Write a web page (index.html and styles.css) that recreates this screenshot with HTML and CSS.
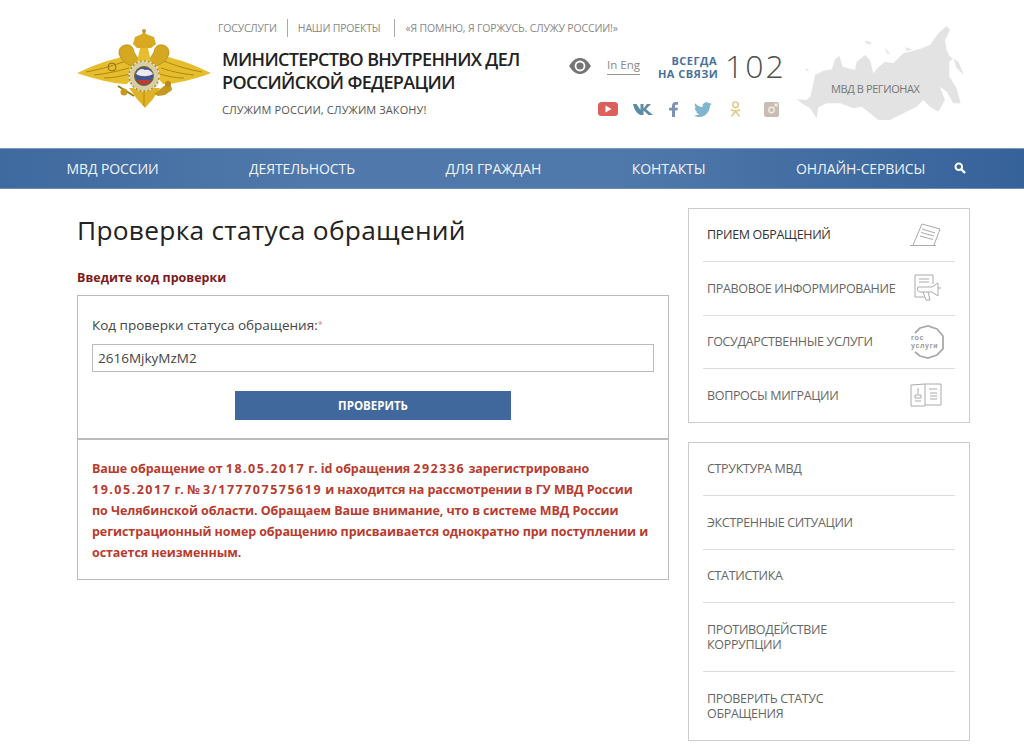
FILE: index.html
```html
<!DOCTYPE html>
<html lang="ru">
<head>
  <meta charset="UTF-8" />
  <title>Проверка статуса обращений</title>
  <link rel="stylesheet" href="styles.css">
</head>
<body>

  <header class="header">
    <svg class="logo" viewBox="0 0 145 90" width="145" height="90">
      <path d="M5 49 C20 42 38 35 56 32 C60 38 62 46 60 54 L55 60 C42 60 22 55 5 49Z" fill="#e6bd2c"/>
      <path d="M139 49 C124 42 108 35 90 32 C86 38 84 46 86 54 L91 60 C104 60 124 55 139 49Z" fill="#e6bd2c"/>
      <path d="M14 48 C26 46 40 42 54 37 M22 51 C34 50 46 47 57 44 M32 54 C40 54 50 52 58 50 M130 48 C118 46 104 42 92 37 M122 51 C110 50 98 47 89 44 M112 54 C104 54 94 52 88 50" stroke="#a8820f" stroke-width="0.9" fill="none"/>
      <circle cx="40" cy="43" r="4" fill="none" stroke="#8e7012" stroke-width="1"/>
      <path d="M57 64 L88 64 L81 75 L73 84 L65 75Z" fill="#e0b226"/>
      <path d="M72 60 V82" stroke="#a8820f" stroke-width="0.8"/>
      <path d="M72 6 L74 10 L82 13 L84 20 L79 24 H65 L61 20 L63 13 L70 10Z" fill="#d9a921"/>
      <circle cx="72" cy="7" r="2" fill="#b59b44"/>
      <path d="M47 30 C46 23 52 20 57 21 C60 22 62 25 62 28 L68 38 L60 42 C54 40 49 36 47 30Z" fill="#d5a822" stroke="#a8820f" stroke-width="0.6"/>
      <path d="M97 30 C98 23 92 20 87 21 C84 22 82 25 82 28 L76 38 L84 42 C90 40 95 36 97 30Z" fill="#d5a822" stroke="#a8820f" stroke-width="0.6"/>
      <path d="M68 24 H76 L79 38 H65Z" fill="#e6bd2c"/>
      <circle cx="72" cy="52" r="15" fill="#d6cfa6" stroke="#b59222" stroke-width="1.500"/>
      <circle cx="72" cy="52" r="15" fill="none" stroke="#f0ecd8" stroke-width="1.500" stroke-dasharray="2 2"/>
      <circle cx="72" cy="52" r="9.500" fill="#44558f" stroke="#8a6a14"/>
      <path d="M64 50 C66 45 70 44 73 46 C77 45 79 47 81 50 C76 53 69 53 64 50Z" fill="#eceaf0"/>
      <path d="M65 56 H79 L76 60 H68Z" fill="#c33a30"/>
      <path d="M46 62 L62 72" stroke="#9c7a12" stroke-width="2"/>
      <circle cx="52" cy="68" r="3.500" fill="#c39a1f"/>
      <path d="M82 70 L92 62 C97 58 100 62 100 66 L93 71 L86 72Z" fill="#c39a1f"/>
      <circle cx="96" cy="60" r="3" fill="#b58a18"/>
    </svg>

    <div class="title-col">
      <nav class="top-links">
        <a>ГОСУСЛУГИ</a>
        <a>НАШИ ПРОЕКТЫ</a>
        <a>«Я ПОМНЮ, Я ГОРЖУСЬ. СЛУЖУ РОССИИ!»</a>
      </nav>
      <div class="org-name">МИНИСТЕРСТВО ВНУТРЕННИХ ДЕЛ<br>РОССИЙСКОЙ ФЕДЕРАЦИИ</div>
      <div class="motto">СЛУЖИМ РОССИИ, СЛУЖИМ ЗАКОНУ!</div>
    </div>

    <div class="contact-col">
      <div class="contact-top">
        <svg viewBox="0 0 22 16" width="22" height="16">
          <path d="M0 8 C4 2 7 0 11 0 C15 0 18 2 22 8 C18 14 15 16 11 16 C7 16 4 14 0 8Z" fill="#757575"/>
          <circle cx="11" cy="8" r="5.400" fill="#fff"/>
          <circle cx="11" cy="8" r="3.600" fill="#757575"/>
        </svg>
        <a class="lang">In Eng</a>
        <div class="always">ВСЕГДА<br>НА СВЯЗИ</div>
        <div class="phone">102</div>
      </div>
      <div class="socials">
        <svg viewBox="0 0 20 14" width="20" height="14"><rect width="20" height="14" rx="3.500" fill="#dc5f5b"/><path d="M7.500 3.500 L13.500 7 L7.500 10.500Z" fill="#fff"/></svg>
        <svg class="vk" viewBox="0 0 20 11" width="20" height="11"><path d="M0 0 H3.500 L7.500 6 V0 H10.500 V4.500 L14 0 H18 L13 5 L20 11 H15.500 L10.500 6.500 V11 H7.500 C3.500 9.500 1 5 0 0Z" fill="#5c8ba3"/></svg>
        <svg viewBox="0 0 9 15" width="9" height="15"><path d="M3 15 V8.500 H0 V5.800 H3 V3.800 C3 1.400 4.500 0 7 0 H9 V2.800 H7.500 C6.500 2.800 6 3.300 6 4.300 V5.800 H9 L8.500 8.500 H6 V15Z" fill="#7d93b5"/></svg>
        <svg viewBox="0 0 18 15" width="18" height="15"><path d="M18 2 L16 3.500 C16 9 12 15 5.500 15 C3.500 15 1.500 14.500 0 13.500 C2 13.700 4 13 5.400 12 C3.800 12 2.500 11 2 9.500 L3.600 9.400 C1.800 9 .7 7.500 .7 5.700 L2.300 6.100 C.8 5 .4 3 1.200 1.300 C3 3.500 5.700 4.900 8.700 5 C8.200 2.500 10 .3 12.500 .3 C13.600 .3 14.600 .8 15.300 1.500 L17.500 .7 L16.200 2.500Z" fill="#7fb5cf"/></svg>
        <svg class="ok" viewBox="0 0 11 16" width="11" height="16"><circle cx="5.500" cy="3.800" r="2.800" fill="none" stroke="#dfcd93" stroke-width="1.700"/><path d="M1 8.500 C3.500 10.300 7.500 10.300 10 8.500 M5.500 10 L1.500 15.500 M5.500 10 L9.500 15.500" stroke="#dfcd93" stroke-width="1.700" fill="none"/></svg>
        <svg class="ig" viewBox="0 0 15 15" width="15" height="15"><rect width="15" height="15" rx="2" fill="#c9bdb3"/><circle cx="7.500" cy="8" r="3.400" fill="#f2ece6"/><circle cx="7.500" cy="8" r="2" fill="#c9bdb3"/><rect x="10.500" y="1.500" width="3" height="3" fill="#f2ece6"/></svg>
      </div>
    </div>

    <div class="regions">
      <svg class="map" viewBox="0 0 570 330" width="190" height="110">
        <path d="M20 238 L50 240 L62 228 L70 190 L75 165 L100 152 L125 148 L135 118 L148 108 L158 140 L195 150 L200 125 L225 105 L240 120 L250 160 L262 145 L285 125 L310 130 L340 100 L370 92 L395 85 L420 75 L445 40 L470 18 L480 30 L465 60 L470 90 L480 110 L505 125 L522 165 L500 145 L490 115 L478 125 L478 170 L500 205 L512 250 L490 250 L470 215 L450 200 L465 240 L445 275 L420 260 L400 240 L380 260 L340 280 L300 300 L265 300 L240 280 L215 260 L190 265 L150 250 L110 250 L85 262 L80 295 L60 265 L35 250Z" fill="#e3e3e3"/>
        <path d="M225 62 L245 66 L240 74 L228 70Z M282 82 L300 100 L292 102Z M345 82 L368 88 L350 94Z M45 145 L58 150 L50 154Z" fill="#e6e6e6"/>
      </svg>
      <span class="regions-text">МВД В РЕГИОНАХ</span>
    </div>
  </header>

  <nav class="main-nav">
    <a>МВД РОССИИ</a>
    <a>ДЕЯТЕЛЬНОСТЬ</a>
    <a>ДЛЯ ГРАЖДАН</a>
    <a>КОНТАКТЫ</a>
    <a>ОНЛАЙН-СЕРВИСЫ</a>
    <svg viewBox="0 0 12 12" width="12" height="12"><circle cx="4.800" cy="4.800" r="3.300" fill="none" stroke="#fff" stroke-width="2"/><path d="M7.500 7.500 L11 11" stroke="#fff" stroke-width="2.400"/></svg>
  </nav>

  <div class="page">
    <main class="content">
      <h1>Проверка статуса обращений</h1>
      <h2 class="form-title">Введите код проверки</h2>
      <form class="check-form">
        <label for="code">Код проверки статуса обращения:<span class="req">*</span></label>
        <input type="text" id="code" value="2616MjkyMzM2" />
        <button type="button">ПРОВЕРИТЬ</button>
      </form>
      <div class="result">
        Ваше обращение от <span class="num">18.05.2017</span> г. id обращения <span class="num">292336</span> зарегистрировано<br>
        <span class="num">19.05.2017</span> г. № <span class="num">3/177707575619</span> и находится на рассмотрении в ГУ МВД России<br>
        по Челябинской области. Обращаем Ваше внимание, что в системе МВД России<br>
        регистрационный номер обращению присваивается однократно при поступлении и<br>
        остается неизменным.
      </div>
    </main>

    <aside class="sidebar">
      <ul class="side-box">
        <li class="side-item active">
          <span>ПРИЕМ ОБРАЩЕНИЙ</span>
          <svg viewBox="0 0 32 24" width="32" height="24" fill="none" stroke="#aaa"><path d="M0 22.500 H26 M3 22 L12 1 L30 6 L24 22"/><path d="M12 6 L25 10 M11 9.500 L24 13 M10 13 L23 16.500"/></svg>
        </li>
        <li class="side-item">
          <span>ПРАВОВОЕ ИНФОРМИРОВАНИЕ</span>
          <svg viewBox="0 0 28 28" width="28" height="28" fill="none" stroke="#aaa"><path d="M19 10 V1 H1 V23 H10"/><path d="M5 5 H15 M5 8 H15"/><path d="M4 13 H18 L24 9 V22 L18 18 H6 C3 18 3 13 4 13Z"/><path d="M24 14 H27 M9 18 L12 26 H16 L14 18"/></svg>
        </li>
        <li class="side-item">
          <span>ГОСУДАРСТВЕННЫЕ УСЛУГИ</span>
          <svg class="gos" viewBox="0 0 35 34" width="35" height="34"><path d="M5 8 L10 3 L18 1 L27 4 L33 11 V24 L27 30 L18 33 L10 31 L5 27" fill="none" stroke="#aaa" stroke-width="1.800"/><text x="1" y="15" class="gos-text">гос</text><text x="1" y="23" class="gos-text">услуги</text></svg>
        </li>
        <li class="side-item">
          <span>ВОПРОСЫ МИГРАЦИИ</span>
          <svg viewBox="0 0 32 24" width="32" height="24" fill="none" stroke="#aaa"><path d="M1 2 L15 1 V23 H1Z M15 1 H31 V22 H15"/><path d="M8 5 V11 M5 12 H11 V15 H5Z M5 18 H11 M19 6 H27 M20 10 H27 M20 13 H27 M20 16 H27"/></svg>
        </li>
      </ul>
      <ul class="side-box">
        <li class="side-item"><span>СТРУКТУРА МВД</span></li>
        <li class="side-item"><span>ЭКСТРЕННЫЕ СИТУАЦИИ</span></li>
        <li class="side-item"><span>СТАТИСТИКА</span></li>
        <li class="side-item tall"><span>ПРОТИВОДЕЙСТВИЕ<br>КОРРУПЦИИ</span></li>
        <li class="side-item tall"><span>ПРОВЕРИТЬ СТАТУС<br>ОБРАЩЕНИЯ</span></li>
      </ul>
    </aside>
  </div>

</body>
</html>
```

FILE: styles.css
```css
body {
  font-family: "Open Sans", "Noto Sans", sans-serif;
  margin: 0;
  background-color: #fff;
  color: #333;
  overflow: hidden;
}

a {
  color: inherit;
}

/* header */
.header {
  height: 148px;
  display: flex;
  padding-left: 72px;
  box-sizing: border-box;
  position: relative;
}

.logo {
  margin-top: 24px;
  flex: none;
}

.title-col {
  width: 338px;
  margin-left: 1px;
  padding-top: 19px;
  flex: none;
}

.top-links {
  display: flex;
  height: 18px;
  align-items: center;
  font-size: 10.5px;
  color: #888;
  white-space: nowrap;
  letter-spacing: -0.2px;
}

.top-links a + a {
  border-left: 1px solid #aaa;
  margin-left: 10px;
  padding-left: 10px;
  line-height: 18px;
}

.top-links a:nth-child(3) {
  margin-left: 14px;
  padding-left: 10px;
  letter-spacing: -0.15px;
}

.org-name {
  margin-top: 11px;
  margin-left: 4px;
  font-size: 18px;
  line-height: 23px;
  font-weight: 600;
  color: #222;
  letter-spacing: -0.65px;
  white-space: nowrap;
}

.motto {
  margin-top: 8px;
  margin-left: 4px;
  font-size: 11px;
  color: #555;
  letter-spacing: 0.1px;
}

.contact-col {
  width: 222px;
  padding-top: 48px;
  margin-left: 13px;
  flex: none;
}

.contact-top {
  display: flex;
  align-items: center;
  height: 36px;
}

.lang {
  margin-left: 16px;
  font-size: 11.5px;
  color: #888;
  border-bottom: 1px solid #999;
  padding-bottom: 2px;
}

.always {
  margin-left: 18px;
  padding-top: 2px;
  width: 59px;
  text-align: right;
  font-size: 11px;
  line-height: 13px;
  font-weight: 700;
  letter-spacing: 0.45px;
  color: #4a7199;
  white-space: nowrap;
}

.phone {
  margin-left: 8px;
  font-size: 32px;
  line-height: 36px;
  font-weight: 300;
  color: #4f4f4f;
  letter-spacing: 2px;
}

.socials {
  display: flex;
  align-items: center;
  gap: 16px;
  margin-top: 17px;
  margin-left: 29px;
}

.socials .vk {
  margin-left: -1px;
}

.socials .ok {
  margin-left: 2px;
}

.socials .ig {
  margin-left: 7px;
}

.regions {
  position: absolute;
  left: 790px;
  top: 20px;
  width: 190px;
  height: 110px;
}

.regions-text {
  position: absolute;
  left: 41px;
  top: 61px;
  font-size: 11px;
  color: #777;
  letter-spacing: -0.4px;
  white-space: nowrap;
}

/* main menu */
.main-nav {
  height: 41px;
  display: flex;
  align-items: center;
  gap: 90.5px;
  padding: 0 0 0 66.5px;
  background: linear-gradient(90deg, #3f6a9f 0%, #5078aa 30%, #5079ab 60%, #36629a 100%);
  border-top: 1px solid #7b9abf;
  border-bottom: 1px solid #6d8fb5;
  color: #fff;
  font-size: 14px;
  letter-spacing: -0.1px;
  box-sizing: border-box;
}

.main-nav a {
  opacity: 0.92;
  white-space: nowrap;
}

.main-nav svg {
  margin-left: -61.5px;
  margin-top: -2px;
}

/* page */
.page {
  display: flex;
  padding: 19px 54px 0 77px;
}

.content {
  width: 592px;
  flex: none;
}

h1 {
  margin: 0;
  font-size: 26.3px;
  line-height: 44px;
  font-weight: 400;
  color: #222;
  letter-spacing: 0.27px;
}

.form-title {
  margin: 17px 0 8px;
  font-size: 12.5px;
  line-height: 18px;
  font-weight: 700;
  color: #7d1a1c;
}

.check-form {
  border: 1px solid #bbb;
  padding: 20px 14px 18px;
  height: 144px;
  box-sizing: border-box;
  text-align: center;
}

.check-form label {
  display: block;
  text-align: left;
  font-size: 13.5px;
  line-height: 18px;
  color: #444;
}

.req {
  color: #d58a80;
  font-size: 9px;
  vertical-align: top;
}

.check-form input {
  display: block;
  width: 100%;
  height: 28px;
  margin-top: 10px;
  padding: 0 5px;
  box-sizing: border-box;
  border: 1px solid #bbb;
  font-family: inherit;
  font-size: 13.5px;
  color: #444;
}

.check-form button {
  width: 276px;
  height: 29px;
  margin-top: 19px;
  background-color: #41689c;
  color: #fff;
  border: none;
  font-family: inherit;
  font-size: 11.5px;
  font-weight: 700;
}

.result {
  margin-top: -1px;
  border: 1px solid #bbb;
  border-top-width: 2px;
  padding: 18px 14px 17px;
  height: 142px;
  box-sizing: border-box;
  font-size: 12.5px;
  line-height: 21px;
  font-weight: 700;
  letter-spacing: -0.08px;
  color: #b83b2e;
  white-space: nowrap;
}

.num {
  letter-spacing: 1.5px;
}

/* right column */
.sidebar {
  width: 282px;
  margin-left: 19px;
  flex: none;
}

.side-box {
  list-style: none;
  margin: 0 0 19px;
  padding: 0 14px;
  border: 1px solid #ccc;
}

.side-item {
  height: 53.25px;
  display: flex;
  align-items: center;
  justify-content: space-between;
  padding: 0 13px 0 4px;
  border-bottom: 1px solid #ddd;
  box-sizing: border-box;
  font-size: 12.5px;
  line-height: 15px;
  color: #666;
  letter-spacing: -0.33px;
  white-space: nowrap;
}

.side-item:first-child {
  padding-bottom: 1px;
}

.side-item:last-child {
  border-bottom: none;
}

.side-item.active {
  color: #333;
}

.side-item.tall {
  height: 68px;
}

.side-item.tall:nth-child(4) {
  height: 69px;
}

.side-item svg {
  flex: none;
}

.gos {
  margin-right: -3px;
}

.gos-text {
  font-family: "Liberation Sans", sans-serif;
  font-size: 7px;
  font-weight: 700;
  letter-spacing: 0.7px;
  fill: #999;
}
```
